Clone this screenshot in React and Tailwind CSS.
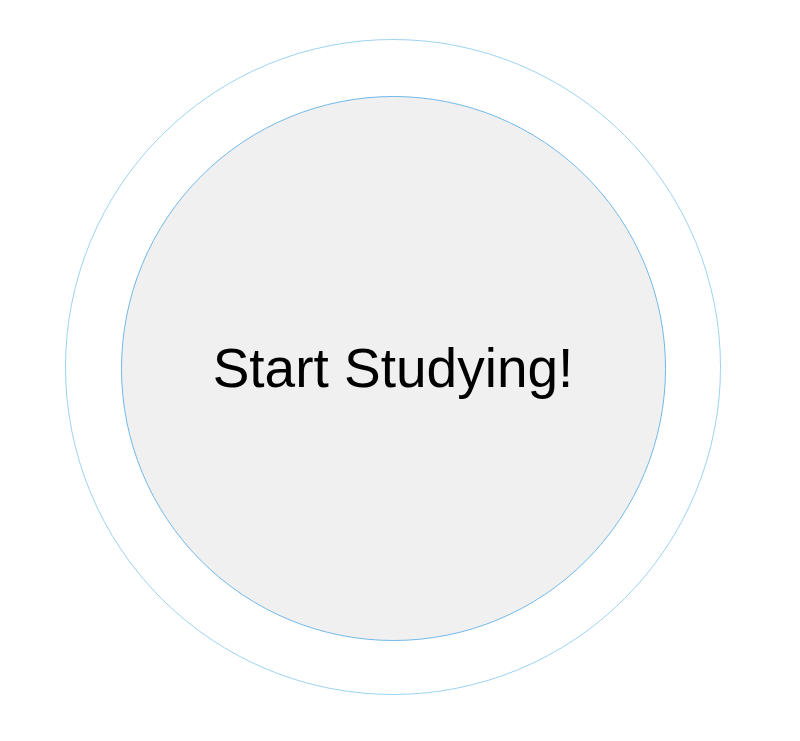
import React from "react";

const App = () => {
  return (
    <div className="w-[800px] h-[741px] bg-white overflow-hidden" style={{ fontFamily: '"Liberation Sans", Arial, sans-serif' }}>
      <div className="ml-[65px] pt-[39px]">
        <div className="w-[656px] h-[656px] rounded-full border border-[#9dd3f2] flex items-center justify-center">
          <button className="mt-[2px] w-[545px] h-[545px] rounded-full border border-[#72b9ea] bg-[#f0f0f0] flex items-center justify-center text-black text-[55px] leading-none">
            Start Studying!
          </button>
        </div>
      </div>
    </div>
  );
};

export default App;
